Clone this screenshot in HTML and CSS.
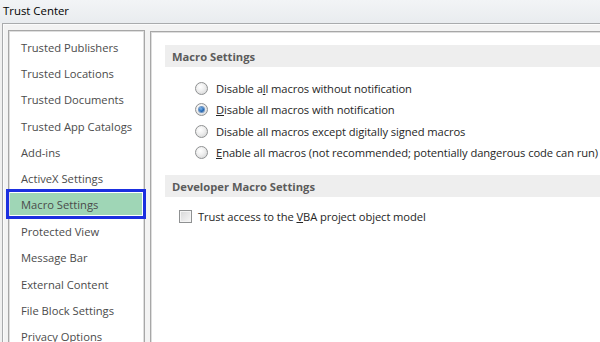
FILE: index.html
```html
<!DOCTYPE html>
<html>
<head>
<meta charset="utf-8">
<link rel="stylesheet" href="styles.css">
</head>
<body>
<div class="window">
  <div class="titlebar">Trust Center</div>
  <div class="frame">
    <div class="nav">
      <div class="item">Trusted Publishers</div>
      <div class="item">Trusted Locations</div>
      <div class="item">Trusted Documents</div>
      <div class="item">Trusted App Catalogs</div>
      <div class="item">Add-ins</div>
      <div class="item">ActiveX Settings</div>
      <div class="item sel">Macro Settings</div>
      <div class="item">Protected View</div>
      <div class="item">Message Bar</div>
      <div class="item">External Content</div>
      <div class="item">File Block Settings</div>
      <div class="item">Privacy Options</div>
    </div>
    <div class="content">
      <div class="section-head">Macro Settings</div>
      <div class="options">
        <div class="opt"><span class="radio"></span><span class="label">Disable a<u>l</u>l macros without notification</span></div>
        <div class="opt"><span class="radio on"></span><span class="label"><u>D</u>isable all macros with notification</span></div>
        <div class="opt"><span class="radio"></span><span class="label">Disable all macros except digitally signed macros</span></div>
        <div class="opt"><span class="radio"></span><span class="label"><u>E</u>nable all macros (not recommended; potentially dangerous code can run)</span></div>
      </div>
      <div class="section-head dev">Developer Macro Settings</div>
      <div class="checkrow"><span class="check"></span><span class="label">Trust access to the <u>V</u>BA project object model</span></div>
    </div>
  </div>
</div>
</body>
</html>
```
FILE: styles.css
```css
html, body {
  margin: 0;
  padding: 0;
  width: 600px;
  height: 342px;
  overflow: hidden;
  background: #f0f0f0;
  font-family: "Open Sans", "Noto Sans", sans-serif;
}
.window {
  width: 600px;
  height: 342px;
  display: flex;
  flex-direction: column;
}
.titlebar {
  height: 23px;
  flex: none;
  box-sizing: border-box;
  padding: 2px 0 0 3px;
  font-size: 11.4px;
  color: #000;
  background: linear-gradient(#f2f4f6, #e9ecef);
  line-height: 18px;
}
.frame {
  flex: 1;
  margin-left: 2px;
  border-top: 1px solid #a9abad;
  border-left: 1px solid #a9abad;
  box-shadow: inset 1px 1px 0 #fbfbfb;
  display: flex;
  align-items: stretch;
  padding: 6px 0 0 5px;
  min-height: 0;
  background: #f3f3f3;
  overflow: hidden;
}
.nav {
  width: 137px;
  flex: none;
  box-sizing: border-box;
  background: #fff;
  border: 1px solid #a7a7a7;
  border-bottom: none;
  box-shadow: inset 1px 1px 0 #dedede, inset -1px 0 0 #dedede;
  padding-top: 3px;
}
.item {
  height: 26.35px;
  display: flex;
  align-items: center;
  padding-left: 12px;
  font-size: 11.2px;
  color: #4b4b4b;
  white-space: nowrap;
}
.item.sel {
  height: 22px;
  margin: 1px 2px 3.35px 1px;
  padding-left: 11px;
  background: #9fd6b6;
  outline: 3px solid #1b2fe0;
  outline-offset: 1px;
}
.content {
  flex: 1;
  margin-left: 5px;
  margin-top: 1px;
  box-sizing: border-box;
  background: #fff;
  border-top: 1px solid #a7a7a7;
  border-left: 1px solid #a7a7a7;
  box-shadow: inset 1px 1px 0 #dedede;
  padding: 13px 0 0 14px;
  min-width: 0;
  overflow: hidden;
}
.section-head {
  height: 22px;
  background: #eeeeee;
  display: flex;
  align-items: center;
  padding-left: 7px;
  font-size: 11.2px;
  font-weight: bold;
  color: #5b5b5b;
  white-space: nowrap;
}
.options {
  padding: 11px 0 0 30px;
  display: flex;
  flex-direction: column;
}
.opt {
  height: 21.3px;
  display: flex;
  align-items: center;
  white-space: nowrap;
}
.label {
  font-size: 11.2px;
  color: #262626;
  white-space: nowrap;
  letter-spacing: -0.09px;
}
.radio {
  width: 13px;
  height: 13px;
  box-sizing: border-box;
  border-radius: 50%;
  border: 1px solid #8f9192;
  background: radial-gradient(circle at 40% 35%, #ffffff 0%, #f0f0f0 40%, #cfd0d1 100%);
  margin-right: 8px;
  flex: none;
  display: flex;
  align-items: center;
  justify-content: center;
}
.radio.on::after {
  content: "";
  width: 5px;
  height: 5px;
  border-radius: 50%;
  background: radial-gradient(circle at 40% 35%, #7fb6ea 0%, #1d63b3 60%, #0d3f7a 100%);
  box-shadow: 0 0 0 1px #6f95c2;
}
.section-head.dev {
  margin-top: 12px;
}
.checkrow {
  display: flex;
  align-items: center;
  padding: 12px 0 0 14px;
  height: 14px;
}
.check {
  width: 13px;
  height: 13px;
  box-sizing: border-box;
  border: 1px solid #8f9192;
  background: linear-gradient(135deg, #d6d7d8, #f7f7f7);
  box-shadow: inset 0 0 0 1px #f4f4f4;
  margin-right: 6px;
  flex: none;
}
```
